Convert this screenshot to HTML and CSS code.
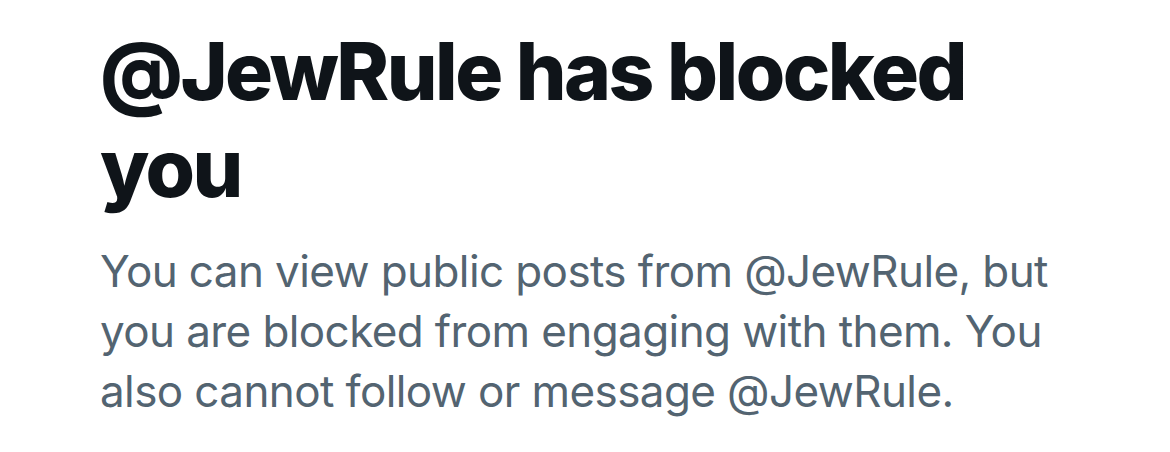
FILE: index.html
```html
<!DOCTYPE html>
<html>
<head>
<meta charset="utf-8">
<link rel="stylesheet" href="styles.css">
</head>
<body>
<div class="blocked">
  <h1 class="title">@JewRule has blocked you</h1>
  <p class="desc">You can view public posts from @JewRule, but you are blocked from engaging with them. You also cannot follow or message @JewRule.</p>
</div>
</body>
</html>
```
FILE: styles.css
```css
html, body {
  margin: 0;
  padding: 0;
  background: #ffffff;
}
.blocked {
  padding: 22px 0 0 100px;
  width: 980px;
  display: flex;
  flex-direction: column;
  gap: 25px;
}
.title {
  margin: 0;
  font-family: Inter, "Noto Sans", sans-serif;
  font-weight: 800;
  font-size: 80px;
  line-height: 97px;
  color: #0f1419;
  letter-spacing: -2.5px;
}
.desc {
  margin: 0;
  font-family: Inter, "Noto Sans", sans-serif;
  font-weight: 400;
  font-size: 44px;
  line-height: 60px;
  color: #536471;
  letter-spacing: -0.6px;
}
```
